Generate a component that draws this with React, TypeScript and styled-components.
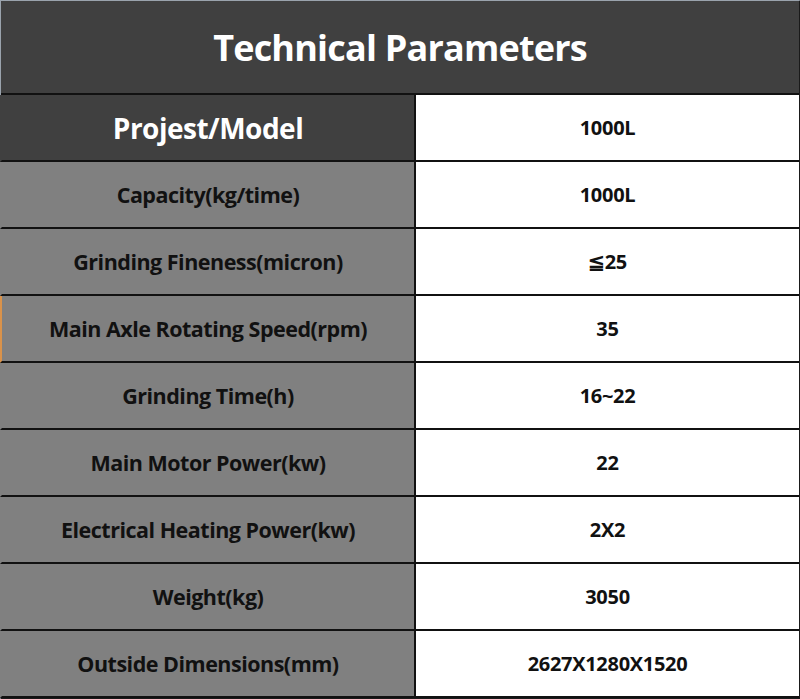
import React from "react";
import styled, { createGlobalStyle } from "styled-components";

const Global = createGlobalStyle`
  html, body { margin: 0; padding: 0; background: #ffffff; }
  body { font-family: "Open Sans", Lato, sans-serif; }
`;

const Table = styled.div`
  width: 798px;
  height: 697px;
  display: grid;
  grid-template-columns: 415px 1fr;
  grid-template-rows: 94px repeat(9, 1fr);
  border-right: 2px solid #1a1a1a;
  border-bottom: 2px solid #1a1a1a;
  border-top: 1px solid #9aa3ad;
  border-left: 1px solid #9aa3ad;
  box-sizing: content-box;
  background: #000;
`;

const Title = styled.div`
  grid-column: 1 / span 2;
  background: #404040;
  color: #ffffff;
  display: flex;
  align-items: center;
  justify-content: center;
  font-weight: 700;
  font-size: 36px;
  letter-spacing: -0.8px;
  border-bottom: 2px solid #111;
  box-sizing: border-box;
`;

const Label = styled.div<{ $dark?: boolean; $accent?: boolean }>`
  background: ${(p) => (p.$dark ? "#404040" : "#808080")};
  color: ${(p) => (p.$dark ? "#ffffff" : "#111111")};
  font-size: ${(p) => (p.$dark ? "28px" : "21.5px")};
  font-weight: 700;
  display: flex;
  align-items: center;
  justify-content: center;
  border-bottom: 2px solid #111;
  border-right: 2px solid #111;
  border-left: 2px solid ${(p) => (p.$accent ? "#d9924a" : "transparent")};
  margin-left: -1px;
  box-sizing: border-box;
  letter-spacing: -0.5px;
`;

const Value = styled.div`
  background: #ffffff;
  color: #111111;
  font-size: 20px;
  font-weight: 700;
  display: flex;
  align-items: center;
  justify-content: center;
  border-bottom: 2px solid #111;
  box-sizing: border-box;
  letter-spacing: -0.3px;
`;

const rows: [string, string][] = [
  ["Capacity(kg/time)", "1000L"],
  ["Grinding Fineness(micron)", "≦25"],
  ["Main Axle Rotating Speed(rpm)", "35"],
  ["Grinding Time(h)", "16~22"],
  ["Main Motor Power(kw)", "22"],
  ["Electrical Heating Power(kw)", "2X2"],
  ["Weight(kg)", "3050"],
  ["Outside Dimensions(mm)", "2627X1280X1520"],
];

export default function App() {
  return (
    <>
      <Global />
      <Table>
        <Title>Technical Parameters</Title>
        <Label $dark>Projest/Model</Label>
        <Value>1000L</Value>
        {rows.map(([l, v], i) => (
          <React.Fragment key={l}>
            <Label $accent={i === 2}>{l}</Label>
            <Value>{v}</Value>
          </React.Fragment>
        ))}
      </Table>
    </>
  );
}
